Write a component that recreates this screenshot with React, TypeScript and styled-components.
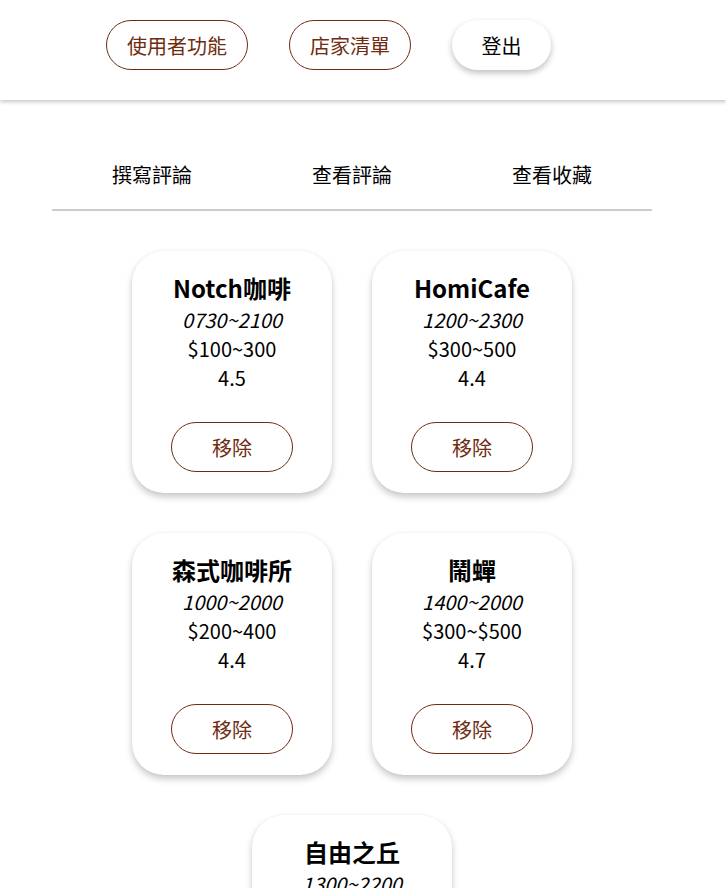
import React from "react";
import styled, { createGlobalStyle } from "styled-components";

const GlobalStyle = createGlobalStyle`
  html {
    overflow-y: scroll;
  }
  html, body {
    margin: 0;
    padding: 0;
    background: #ffffff;
  }
  body {
    font-family: "Noto Sans CJK TC", "Noto Sans", sans-serif;
    color: #000;
  }
  ::-webkit-scrollbar {
    width: 17px;
    background: #f1f1f1;
  }
  ::-webkit-scrollbar-thumb {
    background: #c1c1c1;
    border-left: 2px solid #f1f1f1;
    border-right: 2px solid #f1f1f1;
  }
  * { box-sizing: border-box; }
`;

const brown = "#6e2c10";

const Header = styled.header`
  height: 100px;
  display: flex;
  align-items: flex-start;
  gap: 41px;
  padding: 20px 0 0 106px;
  box-shadow: 0 2px 4px rgba(0, 0, 0, 0.22);
  background: #fff;
`;

const NavButton = styled.button<{ $plain?: boolean }>`
  height: 50px;
  min-width: 99px;
  padding: 0 20px;
  border-radius: 25px;
  font-family: inherit;
  font-size: 20px;
  background: #fff;
  cursor: pointer;
  color: ${(p) => (p.$plain ? "#000" : brown)};
  border: ${(p) => (p.$plain ? "none" : `1px solid ${brown}`)};
  box-shadow: ${(p) => (p.$plain ? "0 3px 6px rgba(0,0,0,0.25)" : "none")};
`;

const Main = styled.main`
  width: 600px;
  margin: 40px 0 0 52px;
  padding-bottom: 10px;
`;

const Tabs = styled.nav`
  display: grid;
  grid-template-columns: repeat(3, 1fr);
  border-bottom: 2px solid #cccccc;
`;

const Tab = styled.div`
  text-align: center;
  font-size: 20px;
  line-height: 29px;
  padding: 20px 0;
  cursor: pointer;
`;

const CardGrid = styled.section`
  display: flex;
  flex-wrap: wrap;
  justify-content: center;
  margin-top: 20px;
`;

const Card = styled.div`
  width: 200px;
  margin: 20px;
  padding: 19px 0 21px;
  border-radius: 32px;
  background: #fff;
  box-shadow: 0 4px 7px rgba(0, 0, 0, 0.22), 0 0 2px rgba(0, 0, 0, 0.06);
  display: flex;
  flex-direction: column;
  align-items: center;
  text-align: center;
`;

const Title = styled.div`
  font-size: 24px;
  font-weight: 700;
  line-height: 35px;
`;

const Line = styled.div<{ $italic?: boolean }>`
  font-size: 20px;
  line-height: 29px;
  font-style: ${(p) => (p.$italic ? "italic" : "normal")};
`;

const RemoveButton = styled.button`
  margin-top: 30px;
  width: 122px;
  height: 50px;
  border-radius: 25px;
  border: 1px solid ${brown};
  background: #fff;
  color: ${brown};
  font-family: inherit;
  font-size: 20px;
  cursor: pointer;
`;

const shops = [
  { name: "Notch咖啡", hours: "0730~2100", price: "$100~300", rating: "4.5" },
  { name: "HomiCafe", hours: "1200~2300", price: "$300~500", rating: "4.4" },
  { name: "森式咖啡所", hours: "1000~2000", price: "$200~400", rating: "4.4" },
  { name: "鬧蟬", hours: "1400~2000", price: "$300~$500", rating: "4.7" },
  { name: "自由之丘", hours: "1300~2200", price: "$200~400", rating: "4.6" },
];

export default function App() {
  return (
    <>
      <GlobalStyle />
      <Header>
        <NavButton>使用者功能</NavButton>
        <NavButton>店家清單</NavButton>
        <NavButton $plain>登出</NavButton>
      </Header>
      <Main>
        <Tabs>
          <Tab>撰寫評論</Tab>
          <Tab>查看評論</Tab>
          <Tab>查看收藏</Tab>
        </Tabs>
        <CardGrid>
          {shops.map((s) => (
            <Card key={s.name}>
              <Title>{s.name}</Title>
              <Line $italic>{s.hours}</Line>
              <Line>{s.price}</Line>
              <Line>{s.rating}</Line>
              <RemoveButton>移除</RemoveButton>
            </Card>
          ))}
        </CardGrid>
      </Main>
    </>
  );
}
